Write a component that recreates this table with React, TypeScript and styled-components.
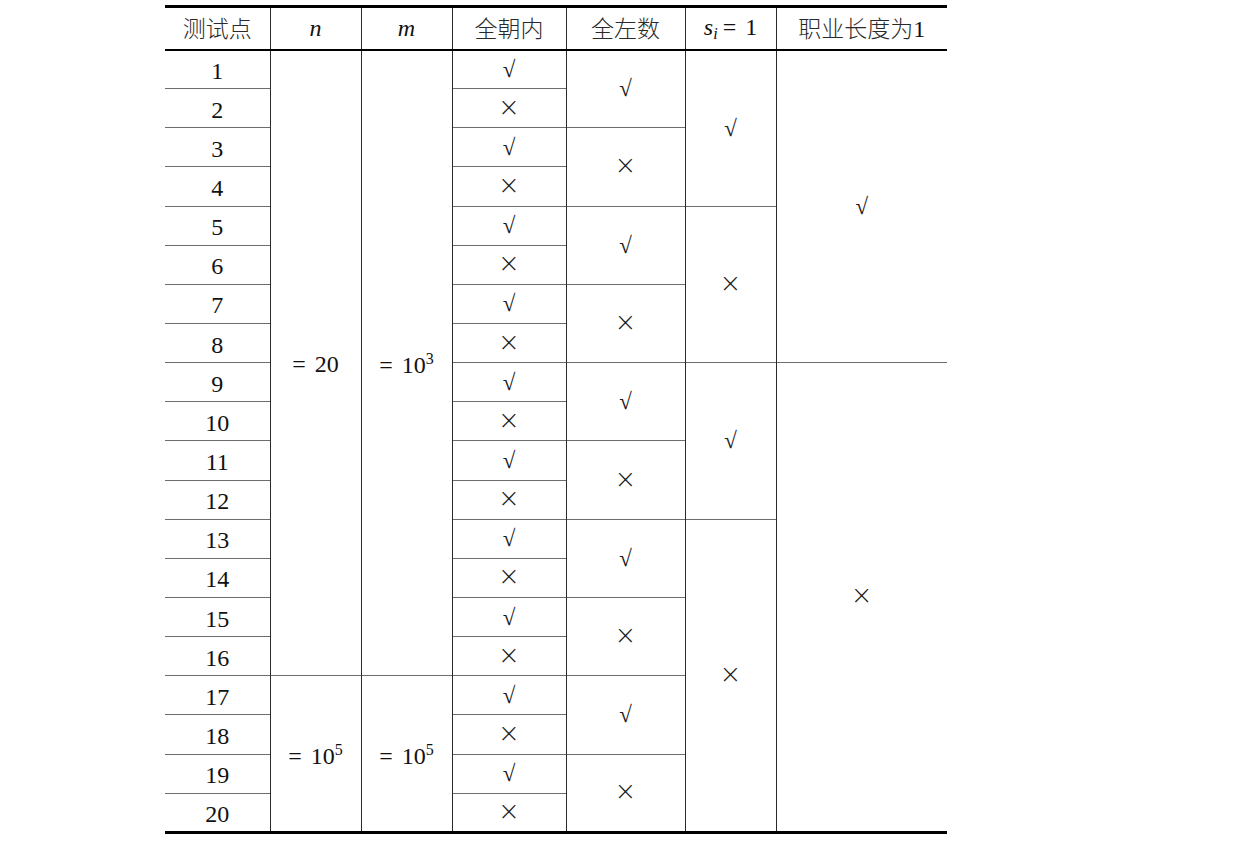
import React from "react";
import styled, { createGlobalStyle } from "styled-components";

const GlobalStyle = createGlobalStyle`
  html, body {
    margin: 0;
    padding: 0;
    background: #ffffff;
  }
  body {
    font-family: "Liberation Serif", "Noto Sans CJK SC", serif;
    color: #111;
  }
`;

const Page = styled.div`
  width: 1250px;
  height: 842px;
  padding: 5px 0 0 165px;
  box-sizing: border-box;
`;

const Table = styled.table`
  width: 782px;
  table-layout: fixed;
  border-collapse: collapse;
  border-top: 3px solid #000;
  border-bottom: 3px solid #000;
`;

const HeadRow = styled.tr`
  height: 43px;
  border-bottom: 2px solid #000;
`;

const BodyRow = styled.tr`
  height: 39.15px;
`;

const Cell = styled.td<{ $first?: boolean; $last?: boolean }>`
  padding: 3px 0 0 0;
  text-align: center;
  vertical-align: middle;
  font-family: "Liberation Serif", "Noto Sans CJK SC", serif;
  font-size: 24px;
  color: #111;
  border-top: 1px solid #6e6e6e;
  border-left: ${(p) => (p.$first ? "none" : "1px solid #2a2a2a")};
  border-right: ${(p) => (p.$last ? "none" : "1px solid #2a2a2a")};
  line-height: 1;
`;

const HeadCell = styled(Cell).attrs({ as: "th" })`
  font-weight: normal;
  border-top: none;
  padding-top: 0;
`;

const Cjk = styled.span`
  font-family: "Noto Sans CJK SC", sans-serif;
  font-weight: 300;
  font-size: 23px;
  color: #2a2a2a;
`;

const Var = styled.i`
  font-style: italic;
`;

const Sub = styled.sub`
  font-size: 16px;
  font-style: italic;
  vertical-align: -4px;
  margin-right: 5px;
`;

const Eq = styled.span`
  margin-right: 3px;
`;

const Sup = styled.sup`
  font-size: 16px;
  vertical-align: 9px;
`;

const Mark = styled.span<{ $ok: boolean }>`
  display: inline-block;
  font-family: ${(p) => (p.$ok ? '"Liberation Serif", serif' : '"DejaVu Sans", sans-serif')};
  font-size: ${(p) => (p.$ok ? "23px" : "26px")};
  font-weight: ${(p) => (p.$ok ? 400 : 200)};
  color: #1a1a1a;
  transform: translateY(${(p) => (p.$ok ? "-2px" : "-3px")});
`;

const Check = ({ ok }: { ok: boolean }) => <Mark $ok={ok}>{ok ? "√" : "×"}</Mark>;

const Power = ({ exp }: { exp: number }) => (
  <span>
    <Eq>=</Eq> 10<Sup>{exp}</Sup>
  </span>
);

const widths = [105, 91, 91, 114, 119, 91, 171];

const App = () => {
  const rows = Array.from({ length: 20 }, (_, i) => i + 1);

  return (
    <Page>
      <GlobalStyle />
      <Table>
        <colgroup>
          {widths.map((w, i) => (
            <col key={i} style={{ width: w }} />
          ))}
        </colgroup>
        <thead>
          <HeadRow>
            <HeadCell $first>
              <Cjk>测试点</Cjk>
            </HeadCell>
            <HeadCell>
              <Var>n</Var>
            </HeadCell>
            <HeadCell>
              <Var>m</Var>
            </HeadCell>
            <HeadCell>
              <Cjk>全朝内</Cjk>
            </HeadCell>
            <HeadCell>
              <Cjk>全左数</Cjk>
            </HeadCell>
            <HeadCell>
              <Var>s</Var>
              <Sub>i</Sub>
              <Eq>=</Eq> 1
            </HeadCell>
            <HeadCell $last>
              <Cjk>职业长度为</Cjk>1
            </HeadCell>
          </HeadRow>
        </thead>
        <tbody>
          {rows.map((r) => (
            <BodyRow key={r}>
              <Cell $first>{r}</Cell>
              {r === 1 && (
                <Cell rowSpan={16}>
                  <Eq>=</Eq> 20
                </Cell>
              )}
              {r === 17 && (
                <Cell rowSpan={4}>
                  <Power exp={5} />
                </Cell>
              )}
              {r === 1 && (
                <Cell rowSpan={16}>
                  <Power exp={3} />
                </Cell>
              )}
              {r === 17 && (
                <Cell rowSpan={4}>
                  <Power exp={5} />
                </Cell>
              )}
              <Cell>
                <Check ok={r % 2 === 1} />
              </Cell>
              {r % 2 === 1 && (
                <Cell rowSpan={2}>
                  <Check ok={r % 4 === 1} />
                </Cell>
              )}
              {(r === 1 || r === 5 || r === 9) && (
                <Cell rowSpan={4}>
                  <Check ok={r !== 5} />
                </Cell>
              )}
              {r === 13 && (
                <Cell rowSpan={8}>
                  <Check ok={false} />
                </Cell>
              )}
              {r === 1 && (
                <Cell rowSpan={8} $last>
                  <Check ok />
                </Cell>
              )}
              {r === 9 && (
                <Cell rowSpan={12} $last>
                  <Check ok={false} />
                </Cell>
              )}
            </BodyRow>
          ))}
        </tbody>
      </Table>
    </Page>
  );
};

export default App;
